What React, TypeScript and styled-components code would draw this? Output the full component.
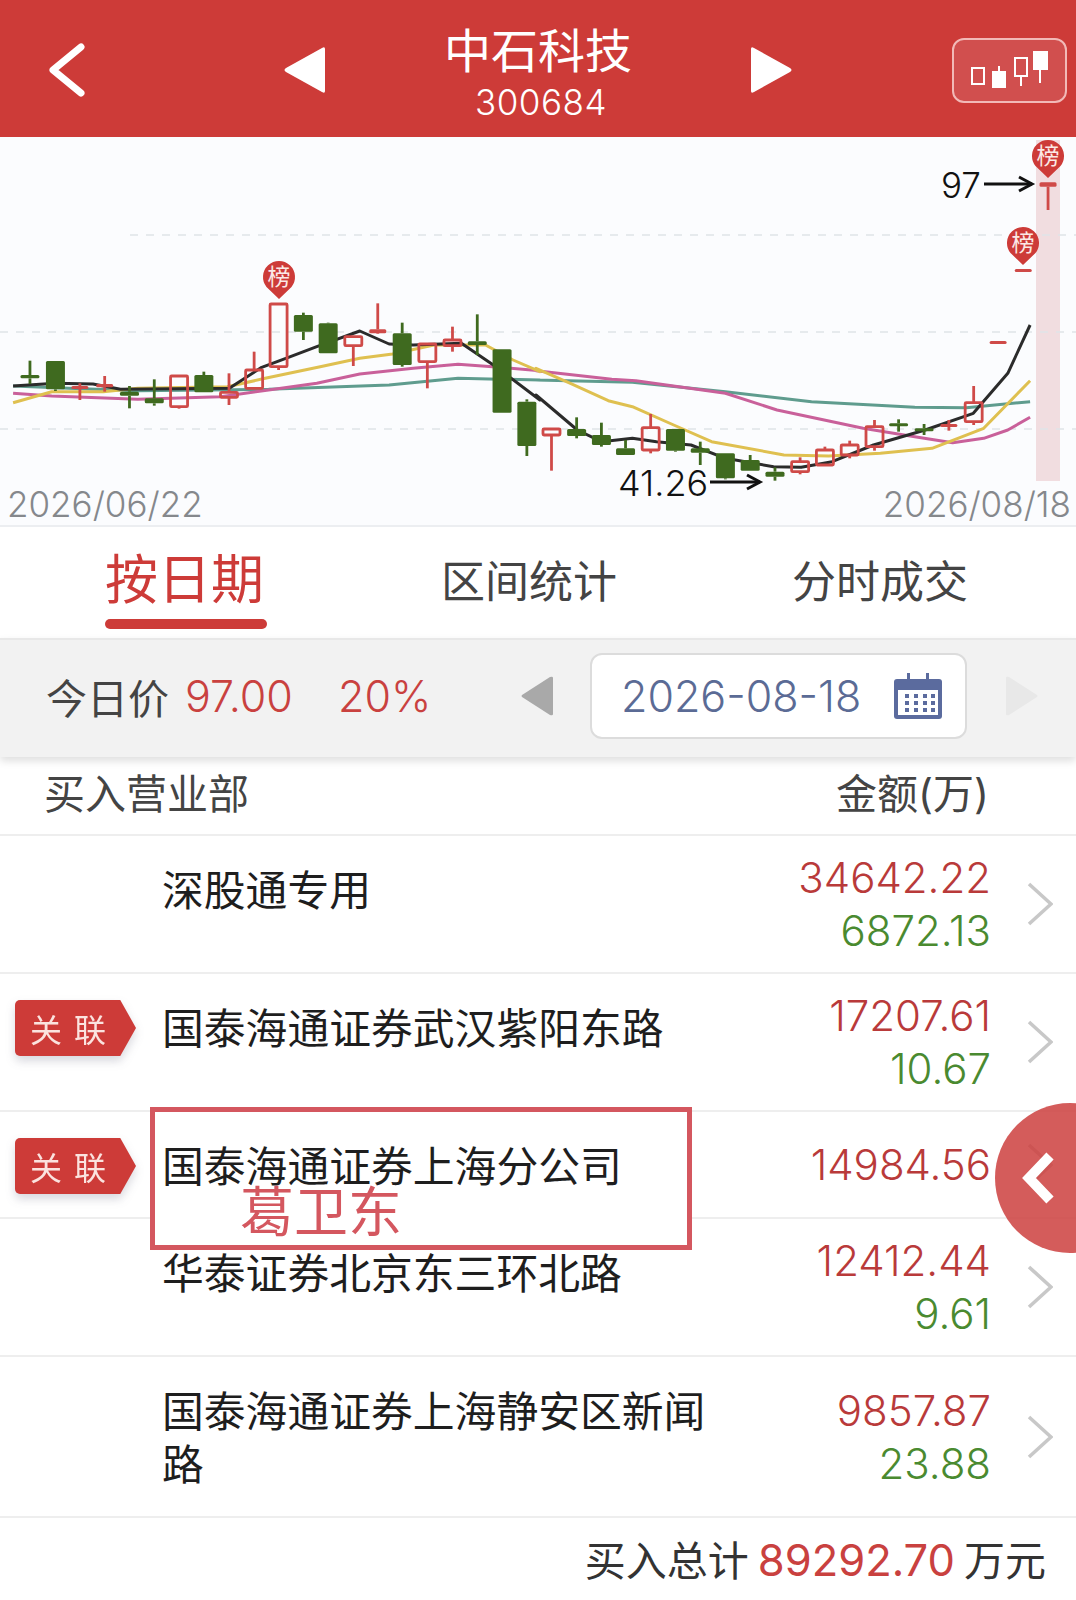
import React from "react";
import styled, { createGlobalStyle } from "styled-components";

const Global = createGlobalStyle`
  html, body { margin: 0; padding: 0; background: #fff; }
  body { font-family: "Inter", "Noto Sans CJK SC", sans-serif; }
  #root { width: 1076px; height: 1600px; overflow: hidden; }
`;

const Page = styled.div`
  position: relative;
  width: 1076px;
  height: 1600px;
  background: #fff;
  overflow: hidden;
`;

const Header = styled.header`
  display: flex;
  align-items: center;
  height: 137px;
  box-sizing: border-box;
  padding: 3px 0 0 48px;
  background: #cd3b38;
  color: #fff;
`;
const HeaderIcon = styled.svg<{ $ml: number }>`
  flex: none;
  margin-left: ${(p) => p.$ml}px;
`;
const TitleBlock = styled.div`
  flex: none;
  width: 422px;
  align-self: flex-start;
  padding-top: 20px;
  display: flex;
  flex-direction: column;
  align-items: center;
`;
const Title = styled.div`
  font-size: 47px;
  line-height: 56px;
`;
const Code = styled.div`
  font-size: 35px;
  line-height: 46px;
  font-weight: 300;
  letter-spacing: 0.5px;
  padding-left: 6px;
`;
const CandleButton = styled.div`
  flex: none;
  margin-left: 159px;
  width: 115px;
  height: 65px;
  box-sizing: border-box;
  border: 2px solid #f2b9b7;
  border-radius: 12px;
  background: #d14f4e;
  display: flex;
`;

const ChartBox = styled.div`
  height: 390px;
  background: #fbfcfe;
  border-bottom: 2px solid #eceef1;
  box-sizing: border-box;
`;
const ChartSvg = styled.svg`
  display: block;
`;
const ChartText = styled.text<{ $muted?: boolean }>`
  font-family: "Inter", sans-serif;
  font-weight: 300;
  fill: ${(p) => (p.$muted ? "#85888c" : "#111")};
`;

const Tabs = styled.nav`
  display: flex;
  gap: 175px;
  height: 111px;
  padding-left: 103px;
  box-sizing: border-box;
`;
const Tab = styled.div<{ $active?: boolean }>`
  font-size: ${(p) => (p.$active ? 53 : 44)}px;
  line-height: ${(p) => (p.$active ? 106 : 110)}px;
  color: ${(p) => (p.$active ? "#cd3b38" : "#444")};
  white-space: nowrap;
  padding: 0 ${(p) => (p.$active ? 2 : 0)}px;
`;
const TabBar = styled.div`
  height: 10px;
  margin: -14px -3px 0 0;
  border-radius: 5px;
  background: #cd3b38;
`;

const Toolbar = styled.div`
  position: relative;
  display: flex;
  align-items: center;
  height: 119px;
  box-sizing: border-box;
  padding: 0 0 5px 46px;
  background: #f2f2f2;
  border-top: 2px solid #e8e8e8;
  box-shadow: 0 4px 8px rgba(0, 0, 0, 0.13);
  font-size: 41px;
  font-weight: 300;
`;
const PriceLabel = styled.span`
  color: #444;
  font-weight: 400;
  width: 139px;
`;
const PriceValue = styled.span<{ $w: number }>`
  color: #c9413f;
  font-size: 43px;
  width: ${(p) => p.$w}px;
  white-space: nowrap;
`;
const Arrow = styled.svg<{ $ml: number }>`
  flex: none;
  margin-left: ${(p) => p.$ml}px;
`;
const DateBox = styled.div`
  flex: none;
  margin-left: 37px;
  width: 377px;
  height: 86px;
  box-sizing: border-box;
  border: 2px solid #dcdcdc;
  border-radius: 12px;
  background: #fff;
  display: flex;
  align-items: center;
  justify-content: space-between;
  padding: 0 23px 0 29px;
  color: #5b6b95;
  font-size: 43px;
`;

const HeadRow = styled.div`
  display: flex;
  justify-content: space-between;
  align-items: center;
  height: 79px;
  box-sizing: border-box;
  padding: 0 87px 10px 44px;
  border-bottom: 2px solid #eee;
  font-size: 41px;
  color: #444;
`;

const Row = styled.div<{ $minH?: number }>`
  display: flex;
  align-items: stretch;
  box-sizing: border-box;
  border-bottom: 2px solid #eee;
  min-height: ${(p) => p.$minH ?? 0}px;
`;
const BadgeSlot = styled.div`
  flex: none;
  width: 162px;
  padding: 26px 0 0 15px;
  box-sizing: border-box;
`;
const BadgeShadow = styled.div`
  width: 121px;
  filter: drop-shadow(0 5px 5px rgba(60, 60, 90, 0.2));
`;
const Badge = styled.div`
  height: 56px;
  box-sizing: border-box;
  padding-left: 15px;
  display: flex;
  align-items: center;
  gap: 12px;
  background: #cd3b38;
  border-radius: 5px;
  clip-path: polygon(0 0, 87% 0, 100% 50%, 87% 100%, 0 100%);
  color: #fbe3df;
  font-size: 32px;
`;
const Name = styled.div`
  flex: none;
  width: 560px;
  padding: 29px 0 23px;
  font-size: 41.8px;
  line-height: 53px;
  color: #1e1e1e;
`;
const Amounts = styled.div`
  flex: 1;
  display: flex;
  flex-direction: column;
  justify-content: center;
  align-items: flex-end;
  padding: 15px 0;
  font-size: 42px;
  font-weight: 300;
  line-height: 53px;
`;
const Buy = styled.div`
  color: #b93a3a;
`;
const Sell = styled.div`
  color: #4a8a30;
`;
const ChevronCell = styled.div`
  flex: none;
  width: 85px;
  padding-left: 36px;
  box-sizing: border-box;
  display: flex;
  align-items: center;
`;

const Footer = styled.div`
  display: flex;
  justify-content: flex-end;
  align-items: baseline;
  gap: 9px;
  padding: 15px 30px 0 0;
  font-size: 41px;
  line-height: 54px;
  color: #333;
`;
const Total = styled.span`
  color: #c9413f;
  font-size: 43.5px;
`;

const Annotation = styled.div`
  position: absolute;
  left: 150px;
  top: 1107px;
  width: 542px;
  height: 143px;
  box-sizing: border-box;
  border: 5px solid #d4575f;
  color: #d4575f;
  font-size: 54px;
  line-height: 60px;
  padding: 71px 0 0 85px;
  &::before {
    content: "";
    position: absolute;
    left: 0;
    right: 0;
    top: 105px;
    height: 4px;
    background: #fff;
  }
`;
const AnnotationText = styled.span`
  position: relative;
`;
const SideTab = styled.div`
  position: absolute;
  left: 995px;
  top: 1103px;
  width: 150px;
  height: 150px;
  border-radius: 50%;
  background: rgba(204, 64, 62, 0.85);
`;
const SideChevron = styled.svg`
  position: absolute;
  left: 26px;
  top: 48px;
`;

const SX = 2.904;
const SY = 3;
const z1x = (x: number) => x / SX;
const z2x = (x: number) => 536 + x / SX;
const zy = (y: number) => 130 + y / SY;

type C = [number, number, number, number, number, "g" | "r" | "h"];
const left: C[] = [
  [87, 692, 735, 745, 762, "g"],
  [161, 693, 693, 778, 783, "g"],
  [232, 760, 768, 775, 810, "r"],
  [304, 738, 762, 772, 785, "r"],
  [376, 768, 785, 797, 835, "g"],
  [448, 748, 805, 820, 827, "g"],
  [520, 738, 738, 830, 836, "h"],
  [592, 725, 735, 787, 787, "g"],
  [665, 730, 787, 802, 825, "h"],
  [738, 665, 720, 775, 775, "h"],
  [809, 522, 522, 710, 720, "h"],
  [881, 548, 555, 605, 630, "g"],
  [953, 578, 580, 670, 670, "g"],
  [1026, 620, 620, 647, 708, "h"],
  [1097, 520, 598, 610, 612, "r"],
  [1168, 578, 610, 705, 710, "g"],
  [1241, 642, 642, 695, 775, "h"],
  [1314, 590, 630, 647, 665, "h"],
  [1386, 553, 634, 645, 675, "g"],
  [1458, 658, 658, 848, 848, "g"],
  [1530, 808, 815, 948, 978, "g"],
];
const right: C[] = [
  [45, 897, 897, 915, 1022, "h"],
  [118, 862, 897, 918, 925, "g"],
  [190, 878, 915, 945, 950, "g"],
  [260, 930, 955, 975, 975, "g"],
  [333, 852, 893, 960, 970, "h"],
  [405, 897, 897, 962, 965, "g"],
  [477, 935, 955, 968, 1005, "g"],
  [550, 970, 970, 1045, 1048, "g"],
  [622, 975, 990, 1022, 1022, "g"],
  [694, 1012, 1025, 1040, 1052, "g"],
  [767, 982, 995, 1025, 1033, "h"],
  [839, 950, 960, 1005, 1008, "h"],
  [911, 932, 945, 975, 985, "h"],
  [983, 870, 890, 950, 962, "h"],
  [1053, 868, 880, 888, 905, "g"],
  [1127, 882, 895, 903, 915, "g"],
  [1199, 870, 882, 887, 902, "r"],
  [1271, 768, 818, 875, 885, "h"],
  [1342, 633, 633, 641, 641, "r"],
  [1415, 417, 417, 425, 425, "r"],
  [1487, 157, 157, 170, 240, "r"],
];

const poly = (a: number[][], b: number[][]) =>
  [
    ...a.map(([x, y]) => `${z1x(x).toFixed(1)},${zy(y).toFixed(1)}`),
    ...b.map(([x, y]) => `${z2x(x).toFixed(1)},${zy(y).toFixed(1)}`),
  ].join(" ");

const lines = [
  {
    c: "#5f9c8e",
    p: poly(
      [[38, 768], [200, 775], [400, 782], [780, 778], [1130, 765], [1330, 745], [1568, 750]],
      [[0, 750], [280, 757], [550, 785], [800, 815], [1100, 832], [1250, 833], [1435, 815]]
    ),
  },
  {
    c: "#c9609a",
    p: poly(
      [[38, 790], [150, 798], [400, 808], [640, 800], [780, 780], [920, 760], [1045, 732], [1200, 715], [1330, 703], [1430, 710], [1568, 722]],
      [[0, 722], [220, 748], [290, 752], [550, 790], [700, 840], [950, 895], [1100, 920], [1210, 938], [1300, 925], [1370, 900], [1435, 862]]
    ),
  },
  {
    c: "#dfc050",
    p: poly(
      [[38, 818], [150, 785], [300, 785], [400, 775], [660, 770], [770, 745], [930, 710], [1045, 685], [1140, 672], [1260, 645], [1410, 645], [1490, 690], [1568, 725]],
      [[0, 715], [100, 760], [210, 812], [280, 830], [400, 885], [510, 935], [720, 975], [850, 978], [1000, 970], [1150, 955], [1300, 895], [1435, 752]]
    ),
  },
  {
    c: "#2b2b2b",
    p: poly(
      [[38, 768], [161, 760], [270, 762], [350, 778], [666, 775], [760, 712], [830, 685], [920, 650], [1045, 603], [1130, 642], [1200, 645], [1340, 640], [1440, 710], [1568, 810]],
      [[0, 795], [120, 900], [190, 935], [280, 925], [350, 935], [450, 945], [550, 985], [690, 1010], [770, 1012], [860, 995], [980, 945], [1130, 900], [1270, 850], [1370, 730], [1435, 585]]
    ),
  },
];

const GREEN = "#3f6a1f";
const RED = "#cf4a48";

function Candle({ d, fx }: { d: C; fx: (x: number) => number }) {
  const [cx, wt, bt, bb, wb, t] = d;
  const x = fx(cx);
  const col = t === "g" ? GREEN : RED;
  const w = t === "g" ? 19 : 17;
  return (
    <g>
      <line x1={x} x2={x} y1={zy(wt)} y2={zy(bt)} stroke={col} strokeWidth={2.8} />
      <line x1={x} x2={x} y1={zy(bb)} y2={zy(wb)} stroke={col} strokeWidth={2.8} />
      {t === "h" ? (
        <rect x={x - w / 2} y={zy(bt)} width={w} height={zy(bb) - zy(bt)} fill="none" stroke={col} strokeWidth={2.8} rx={1} />
      ) : (
        <rect x={x - w / 2} y={zy(bt)} width={w} height={Math.max(zy(bb) - zy(bt), 3)} fill={col} rx={1.5} />
      )}
    </g>
  );
}

function Pin({ x, y }: { x: number; y: number }) {
  return (
    <g>
      <path
        d={`M${x - 12.5} ${y + 10} A16 16 0 1 1 ${x + 12.5} ${y + 10} L${x} ${y + 22} Z`}
        fill="#cd3b38"
      />
      <text x={x} y={y + 8} textAnchor="middle" fontSize="23" fill="#fbe9e6" fontFamily="'Noto Sans CJK SC', sans-serif">
        榜
      </text>
    </g>
  );
}

function ArrowLine({ x1, x2, y }: { x1: number; x2: number; y: number }) {
  return (
    <g stroke="#111" strokeWidth="3" fill="none">
      <line x1={x1} x2={x2} y1={y} y2={y} />
      <polyline points={`${x2 - 13},${y - 7} ${x2},${y} ${x2 - 13},${y + 7}`} />
    </g>
  );
}

function Chart() {
  return (
    <ChartSvg width={1076} height={388} viewBox="0 137 1076 388">
      <rect x={1036} y={140} width={24} height={341} fill="#f1dde0" />
      <g stroke="#e0e4e7" strokeWidth="1.5" strokeDasharray="8 8">
        <line x1={130} x2={1076} y1={235} y2={235} />
        <line x1={0} x2={1076} y1={332} y2={332} />
        <line x1={0} x2={1076} y1={429} y2={429} />
      </g>
      {lines.map((l) => (
        <polyline key={l.c} points={l.p} fill="none" stroke={l.c} strokeWidth={3} strokeLinejoin="round" />
      ))}
      {left.map((d) => (
        <Candle key={"l" + d[0]} d={d} fx={z1x} />
      ))}
      {right.map((d) => (
        <Candle key={"r" + d[0]} d={d} fx={z2x} />
      ))}
      <Pin x={279} y={277} />
      <Pin x={1048} y={156} />
      <Pin x={1023} y={243} />
      <ChartText x={941} y={198} fontSize="35">97</ChartText>
      <ArrowLine x1={984} x2={1032} y={184} />
      <ChartText x={618} y={496} fontSize="36">41.26</ChartText>
      <ArrowLine x1={710} x2={760} y={482} />
      <ChartText x={7} y={517} fontSize="35" $muted>2026/06/22</ChartText>
      <ChartText x={1071} y={517} textAnchor="end" fontSize="35" $muted>2026/08/18</ChartText>
    </ChartSvg>
  );
}

function RowChevron() {
  return (
    <svg width="26" height="44" viewBox="0 0 26 44">
      <polyline points="2,2 24,22 2,42" fill="none" stroke="#c8c8c8" strokeWidth="3.6" />
    </svg>
  );
}

const rows = [
  { name: "深股通专用", buy: "34642.22", sell: "6872.13" },
  { name: "国泰海通证券武汉紫阳东路", buy: "17207.61", sell: "10.67", linked: true },
  { name: "国泰海通证券上海分公司", buy: "14984.56", linked: true },
  { name: "华泰证券北京东三环北路", buy: "12412.44", sell: "9.61" },
  { name: "国泰海通证券上海静安区新闻路", buy: "9857.87", sell: "23.88", minH: 161 },
];

export default function App() {
  return (
    <Page>
      <Global />
      <Header>
        <HeaderIcon $ml={0} width="37" height="54" viewBox="0 0 37 54">
          <polyline points="33,4 5,27 33,50" fill="none" stroke="#fff" strokeWidth="7" strokeLinecap="round" strokeLinejoin="round" />
        </HeaderIcon>
        <HeaderIcon $ml={198} width="44" height="48" viewBox="0 0 44 48">
          <path d="M42 3 V45 Q42 48 39 46 L3 26 Q0 24 3 22 L39 2 Q42 0 42 3 Z" fill="#fff" />
        </HeaderIcon>
        <TitleBlock>
          <Title>中石科技</Title>
          <Code>300684</Code>
        </TitleBlock>
        <HeaderIcon $ml={0} width="44" height="48" viewBox="0 0 44 48">
          <path d="M2 3 V45 Q2 48 5 46 L41 26 Q44 24 41 22 L5 2 Q2 0 2 3 Z" fill="#fff" />
        </HeaderIcon>
        <CandleButton>
          <svg width="111" height="61" viewBox="954 40 111 61">
            <rect x="972" y="68" width="12" height="16" fill="none" stroke="#fff" strokeWidth="2" />
            <rect x="992" y="71" width="14" height="17" fill="#fff" />
            <line x1="999" y1="66" x2="999" y2="72" stroke="#fff" strokeWidth="2" />
            <rect x="1015" y="58" width="12" height="18" fill="none" stroke="#fff" strokeWidth="2" />
            <line x1="1021" y1="76" x2="1021" y2="86" stroke="#fff" strokeWidth="2" />
            <rect x="1033" y="51" width="15" height="19" fill="#fff" />
            <line x1="1040" y1="70" x2="1040" y2="83" stroke="#fff" strokeWidth="2" />
          </svg>
        </CandleButton>
      </Header>

      <ChartBox>
        <Chart />
      </ChartBox>

      <Tabs>
        <Tab $active>
          按日期
          <TabBar />
        </Tab>
        <Tab>区间统计</Tab>
        <Tab>分时成交</Tab>
      </Tabs>

      <Toolbar>
        <PriceLabel>今日价</PriceLabel>
        <PriceValue $w={153}>97.00</PriceValue>
        <PriceValue $w={86}>20%</PriceValue>
        <Arrow $ml={97} width="32" height="40" viewBox="0 0 32 40">
          <path d="M32 2 V38 Q32 40 29 39 L1 21 Q0 20 1 19 L29 1 Q32 0 32 2 Z" fill="#a9a9a9" />
        </Arrow>
        <DateBox>
          <span>2026-08-18</span>
          <svg width="48" height="46" viewBox="0 0 48 46">
            <rect x="0" y="6" width="48" height="40" rx="3" fill="#5b6b9e" />
            <rect x="4" y="17" width="40" height="25" fill="#fff" />
            <rect x="13" y="0" width="3" height="13" fill="#5b6b9e" />
            <rect x="32" y="0" width="3" height="13" fill="#5b6b9e" />
            <g fill="#5b6b9e">
              {[12, 21, 30, 38].map((x) =>
                [21, 28, 35].map((y) => <rect key={`${x}-${y}`} x={x - 1} y={y} width="4" height="4" />)
              )}
            </g>
          </svg>
        </DateBox>
        <Arrow $ml={39} width="32" height="40" viewBox="0 0 32 40">
          <path d="M0 2 V38 Q0 40 3 39 L31 21 Q32 20 31 19 L3 1 Q0 0 0 2 Z" fill="#e8e8e8" />
        </Arrow>
      </Toolbar>

      <HeadRow>
        <span>买入营业部</span>
        <span>金额(万)</span>
      </HeadRow>

      {rows.map((r) => (
        <Row key={r.name} $minH={r.minH}>
          <BadgeSlot>
            {r.linked && (
              <BadgeShadow>
                <Badge>
                  <span>关</span>
                  <span>联</span>
                </Badge>
              </BadgeShadow>
            )}
          </BadgeSlot>
          <Name>{r.name}</Name>
          <Amounts>
            <Buy>{r.buy}</Buy>
            {r.sell && <Sell>{r.sell}</Sell>}
          </Amounts>
          <ChevronCell>
            <RowChevron />
          </ChevronCell>
        </Row>
      ))}

      <Footer>
        <span>买入总计</span>
        <Total>89292.70</Total>
        <span>万元</span>
      </Footer>

      <Annotation>
        <AnnotationText>葛卫东</AnnotationText>
      </Annotation>
      <SideTab>
        <SideChevron width="34" height="54" viewBox="0 0 34 54">
          <polyline points="29,5 8,27 29,49" fill="none" stroke="#fff" strokeWidth="10" />
        </SideChevron>
      </SideTab>
    </Page>
  );
}
